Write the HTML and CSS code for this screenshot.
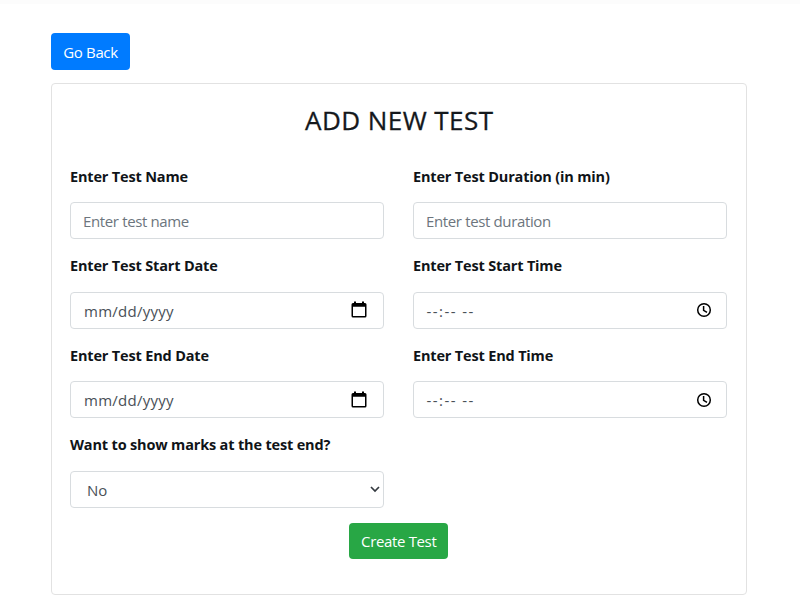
FILE: index.html
```html
<!DOCTYPE html>
<html lang="en">
<head>
<meta charset="utf-8">
<title>Add New Test</title>
<link rel="stylesheet" href="styles.css">
</head>
<body>
<svg width="0" height="0" class="defs"><defs>
<symbol id="cal" viewBox="0 0 16 18"><path fill="#000" fill-rule="evenodd" d="M2 2H3V0.5H5V2H11V0.5H13V2H14Q15.5 2 15.5 3.5V15Q15.5 16.5 14 16.5H2Q0.5 16.5 0.5 15V3.5Q0.5 2 2 2ZM2 5.7V15H14V5.7Z"/></symbol>
<symbol id="clock" viewBox="0 0 16 16"><g fill="none" stroke="#000" stroke-width="1.5"><circle cx="8" cy="8" r="6.3"/><path d="M7.6 4V8.3L11 10.4"/></g></symbol>
</defs></svg>
<main class="page">
<button class="btn primary" type="button">Go Back</button>
<form class="card">
<h1>ADD NEW TEST</h1>
<div class="grid">
<div class="field"><label>Enter Test Name</label><div class="control"><span class="placeholder">Enter test name</span></div></div>
<div class="field"><label>Enter Test Duration (in min)</label><div class="control"><span class="placeholder">Enter test duration</span></div></div>
<div class="field"><label>Enter Test Start Date</label><div class="control"><span class="date">mm/dd/yyyy</span><svg class="cal"><use href="#cal"/></svg></div></div>
<div class="field"><label>Enter Test Start Time</label><div class="control"><span class="time">--:-- --</span><svg class="clock"><use href="#clock"/></svg></div></div>
<div class="field"><label>Enter Test End Date</label><div class="control"><span class="date">mm/dd/yyyy</span><svg class="cal"><use href="#cal"/></svg></div></div>
<div class="field"><label>Enter Test End Time</label><div class="control"><span class="time">--:-- --</span><svg class="clock"><use href="#clock"/></svg></div></div>
<div class="field"><label>Want to show marks at the test end?</label><div class="control select"><span>No</span><svg class="chevron" viewBox="0 0 10 7"><path d="M1 1L5 5L9 1" fill="none" stroke="#343a40" stroke-width="1.7"/></svg></div></div>
</div>
<button class="btn success" type="button">Create Test</button>
</form>
</main>
</body>
</html>
```
FILE: styles.css
```css
* { box-sizing: border-box; }
body { margin: 0; height: 600px; overflow: hidden; background: #fff; border-top: 4px solid #fcfcfc; color: #212529; font: 15px/22px "Open Sans", "Noto Sans", sans-serif; }
.defs { display: block; height: 0; }
.page { width: 696px; margin-left: 51px; padding-top: 29px; }
.btn { display: flex; align-items: center; justify-content: center; height: 37px; padding: 0; border: 0; border-radius: 4px; color: #fff; font: inherit; letter-spacing: -0.35px; white-space: nowrap; }
.primary { width: 79px; background: #007bff; }
.card { height: 512px; margin-top: 13px; padding: 18px 18px 18px 18.5px; border: 1px solid #e2e2e2; border-radius: 4px; }
h1 { margin: 0 0 24px; text-align: center; color: #14181c; font-size: 26px; line-height: 36px; font-weight: 500; letter-spacing: 0.45px; -webkit-text-stroke: 0.3px #14181c; }
.grid { display: grid; grid-template-columns: 314px 314px; column-gap: 29px; margin-left: -0.5px; }
.field { height: 89.5px; }
label { display: block; height: 22px; padding-top: 3.5px; margin-bottom: 18px; color: #101418; font-size: 14.5px; font-weight: 700; letter-spacing: -0.17px; white-space: nowrap; }
.control { display: flex; align-items: center; justify-content: space-between; height: 37px; padding: 1px 12px 0; border: 1px solid #d8dcdf; border-radius: 4px; color: #495057; }
.placeholder { color: #6c757d; letter-spacing: -0.36px; }
.date { margin-left: 1px; letter-spacing: 0.27px; }
.time { margin-left: 0.5px; letter-spacing: 1.45px; }
.cal { width: 16px; height: 18px; margin-right: 4px; margin-top: -1px; }
.clock { width: 16px; height: 16px; margin-right: 2px; margin-top: -1px; }
.select { padding: 1px 3.5px 0 16px; }
.chevron { width: 10px; height: 7px; }
.success { width: 99px; height: 36px; margin: 3px auto 0; position: relative; left: -0.5px; background: #28a745; }
```
